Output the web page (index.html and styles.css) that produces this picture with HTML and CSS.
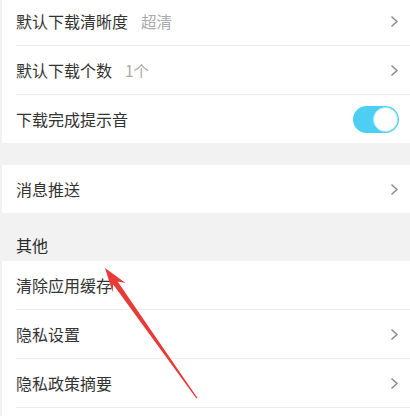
FILE: index.html
```html
<!DOCTYPE html>
<html lang="zh">
<head>
<meta charset="utf-8">
<link rel="stylesheet" href="styles.css">
</head>
<body>
<div class="page">
  <div class="group group-first">
    <div class="row">
      <span class="label">默认下载清晰度</span><span class="value">超清</span>
      <svg class="chev" viewBox="0 0 7 11" width="7" height="11"><polyline points="1,1 6,5.5 1,10" fill="none" stroke="#8c8c8c" stroke-width="1.6" stroke-linecap="round" stroke-linejoin="round"/></svg>
    </div>
    <div class="row">
      <span class="label">默认下载个数</span><span class="value">1个</span>
      <svg class="chev" viewBox="0 0 7 11" width="7" height="11"><polyline points="1,1 6,5.5 1,10" fill="none" stroke="#8c8c8c" stroke-width="1.6" stroke-linecap="round" stroke-linejoin="round"/></svg>
    </div>
    <div class="row">
      <span class="label">下载完成提示音</span>
      <span class="toggle"><span class="knob"></span></span>
    </div>
  </div>
  <div class="gap"></div>
  <div class="group">
    <div class="row">
      <span class="label">消息推送</span>
      <svg class="chev" viewBox="0 0 7 11" width="7" height="11"><polyline points="1,1 6,5.5 1,10" fill="none" stroke="#8c8c8c" stroke-width="1.6" stroke-linecap="round" stroke-linejoin="round"/></svg>
    </div>
  </div>
  <div class="section-title">其他</div>
  <div class="group">
    <div class="row">
      <span class="label">清除应用缓存</span>
    </div>
    <div class="row">
      <span class="label">隐私设置</span>
      <svg class="chev" viewBox="0 0 7 11" width="7" height="11"><polyline points="1,1 6,5.5 1,10" fill="none" stroke="#8c8c8c" stroke-width="1.6" stroke-linecap="round" stroke-linejoin="round"/></svg>
    </div>
    <div class="row">
      <span class="label">隐私政策摘要</span>
      <svg class="chev" viewBox="0 0 7 11" width="7" height="11"><polyline points="1,1 6,5.5 1,10" fill="none" stroke="#8c8c8c" stroke-width="1.6" stroke-linecap="round" stroke-linejoin="round"/></svg>
    </div>
    <div class="row row-tail"></div>
  </div>
  <svg class="arrow" width="410" height="416" viewBox="0 0 410 416">
    <polygon points="105,268 125.5,283 117.6,281.6 197.5,398 196.4,398.6 113.2,284.6 112.6,292.2" fill="#e83a36"/>
  </svg>
</div>
</body>
</html>
```

FILE: styles.css
```css
html, body {
  margin: 0;
  padding: 0;
  background: #f2f2f2;
  overflow: hidden;
}
body {
  width: 410px;
  height: 416px;
  font-family: "Noto Sans CJK SC", "Noto Sans", sans-serif;
  color: #333;
}
.page {
  position: relative;
  padding-left: 2px;
  height: 416px;
  overflow: hidden;
}
.group {
  background: #fff;
  display: flex;
  flex-direction: column;
  padding-left: 14px;
}
.group-first {
  margin-top: -3px;
}
.row {
  height: 48px;
  display: flex;
  align-items: center;
  padding: 0 12px 0 0;
  font-size: 16px;
}
.row + .row {
  border-top: 1px solid #ededed;
}
.row-tail {
  height: 8px;
}
.label {
  color: #333;
  line-height: 22px;
}
.value {
  color: #ababab;
  margin-left: 13px;
  font-size: 15.5px;
}
.chev {
  margin-left: auto;
}
.toggle {
  margin-left: auto;
  width: 46px;
  height: 27px;
  border-radius: 14px;
  background: #4ccff2;
  display: flex;
  align-items: center;
  justify-content: flex-end;
  box-sizing: border-box;
  padding-right: 1px;
  margin-right: -1px;
}
.knob {
  width: 25px;
  height: 25px;
  border-radius: 50%;
  background: #fff;
  box-sizing: border-box;
  border: 1px solid #b5e8f7;
}
.gap {
  height: 22px;
}
.section-title {
  height: 48px;
  box-sizing: border-box;
  padding: 21px 0 0 14px;
  font-size: 16px;
  line-height: 22px;
  color: #2a2a2a;
}
.arrow {
  position: absolute;
  left: 0;
  top: 0;
  pointer-events: none;
}
```
